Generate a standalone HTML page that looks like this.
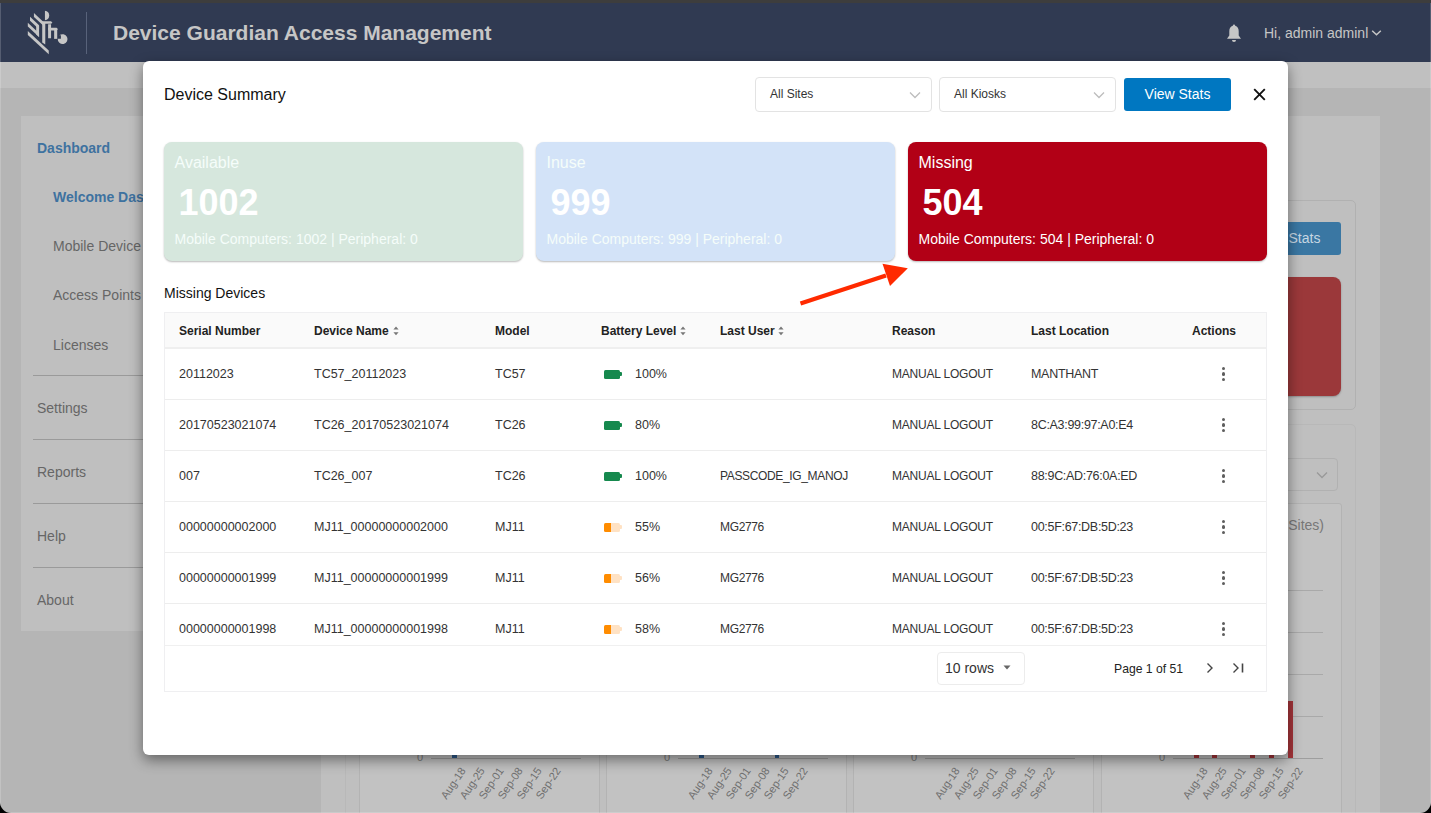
<!DOCTYPE html>
<html><head><meta charset="utf-8">
<style>
*{box-sizing:border-box;margin:0;padding:0}
html,body{width:1431px;height:813px;overflow:hidden;background:#000;font-family:"Liberation Sans",sans-serif}
#win{position:absolute;left:0;top:0;width:1431px;height:813px;background:#b5b5b5;border-radius:0 0 11px 11px;overflow:hidden}
.abs{position:absolute}
#topstrip{left:0;top:0;width:1431px;height:3px;background:#3d3d3d}
#hdr{left:0;top:3px;width:1431px;height:59px;background:#303a52}
#edgeL{left:0;top:3px;width:1px;height:810px;background:rgba(255,255,255,0.18)}
#edgeR{left:1430px;top:3px;width:1px;height:810px;background:rgba(255,255,255,0.18)}
#edgeB{left:0;top:812px;width:1431px;height:1px;background:rgba(255,255,255,0.18)}
.title{left:113px;top:20.5px;font-size:21px;font-weight:bold;color:#c6c6c6;white-space:nowrap}
.hi{left:1264px;top:24.7px;font-size:14px;color:#c6c6c6;white-space:nowrap}
#band{left:0;top:62px;width:1431px;height:26px;background:#c0c0c0}
#side{left:21px;top:116px;width:280px;height:515px;background:#bfbfbf}
#main{left:321px;top:116px;width:1059px;height:697px;background:#bfbfbf}
.sb{position:absolute;font-size:14px;color:#666;white-space:nowrap}
.sbh{font-weight:bold;color:#3e72a0}
.sdiv{position:absolute;left:33px;width:268px;height:1px;background:#9a9a9a}
/* modal */
#modal{left:143px;top:61px;width:1145px;height:694px;background:#fff;border-radius:6px;box-shadow:0 5px 14px rgba(0,0,0,0.45)}
.t{position:absolute;white-space:nowrap}
.sel{position:absolute;top:16px;height:35px;border:1px solid #e3e3e3;border-radius:4px;background:#fff}
.sel span{position:absolute;left:14px;top:9px;font-size:12px;color:#333}
.sel svg{position:absolute;right:10px;top:13px}
.card{position:absolute;top:80.5px;width:359px;height:119px;border-radius:8px;box-shadow:0 1px 2px rgba(0,0,0,0.28)}
.card .l1{position:absolute;left:10.5px;top:12px;font-size:16px;color:#fff}
.card .l2{position:absolute;left:14.5px;top:40px;font-size:36px;font-weight:bold;color:#fff}
.lt .l1,.lt .l3{color:#f5fdfa!important}
.card .l3{position:absolute;left:10.5px;top:89.5px;font-size:14px;color:#fff}
#tbl{position:absolute;left:21px;top:251px;width:1103px;height:380px;border:1px solid #efeff1;overflow:hidden}
.th{position:absolute;left:0;top:0;width:1101px;height:36px;background:#fafafa;border-bottom:2px solid #efefef}
.row{position:absolute;left:0;width:1101px;height:51px;border-bottom:1px solid #ededed;background:#fff}
.c{position:absolute;top:0;line-height:51px;font-size:12.5px;color:#333;white-space:nowrap}
.hc{position:absolute;top:-0.5px;line-height:36px;font-size:12px;font-weight:bold;color:#222;white-space:nowrap}
.bat{position:absolute;left:439px;top:21px;width:16px;height:8.5px;border-radius:1.5px}
.bat:after{content:"";position:absolute;right:-1.7px;top:2.2px;width:1.7px;height:4px;border-radius:0 1px 1px 0;background:inherit}
.g{background:#16894e}
.o{background:linear-gradient(90deg,#ff8c00 0,#ff8c00 44%,#ffe2c4 44%)}
.o:after{background:#ffe2c4}
.mu{font-size:12px;letter-spacing:-0.2px}
.lu{font-size:12px;letter-spacing:-0.35px}
.lo{letter-spacing:-0.3px}
.mo{letter-spacing:-0.2px}
.keb{position:absolute;left:1057px;top:18px;width:4px;height:15px}
.keb i{position:absolute;left:0.2px;width:3.3px;height:3.3px;border-radius:50%;background:#5e5e5e}
</style></head><body>
<div id="win">
  <div class="abs" id="band"></div>
  <div class="abs" id="side">
  </div>
  <div class="sb sbh" style="left:37px;top:140px">Dashboard</div>
  <div class="sb sbh" style="left:53px;top:189px">Welcome Dashboard</div>
  <div class="sb" style="left:53px;top:238px">Mobile Device</div>
  <div class="sb" style="left:53px;top:287px">Access Points</div>
  <div class="sb" style="left:53px;top:337px">Licenses</div>
  <div class="sdiv" style="top:375px"></div>
  <div class="sb" style="left:37px;top:400px">Settings</div>
  <div class="sdiv" style="top:439px"></div>
  <div class="sb" style="left:37px;top:464px">Reports</div>
  <div class="sdiv" style="top:503px"></div>
  <div class="sb" style="left:37px;top:528px">Help</div>
  <div class="sdiv" style="top:567px"></div>
  <div class="sb" style="left:37px;top:592px">About</div>
  <div class="abs" id="main"></div>

  <!-- background main content -->
  <div class="abs" style="left:345px;top:200px;width:1011px;height:210px;border:1px solid #b1b1b1;border-radius:5px"></div>
  <div class="abs" style="left:1234px;top:222px;width:107px;height:33px;background:#3a77a3;border-radius:3px;color:#c6d6e2;font-size:14px;line-height:33px;text-align:center;white-space:nowrap">View Stats</div>
  <div class="abs" style="left:359px;top:277px;width:359px;height:119px;background:#a8b1ab;border-radius:8px;box-shadow:0 1px 2px rgba(0,0,0,0.25)"></div>
  <div class="abs" style="left:731px;top:277px;width:359px;height:119px;background:#a7b0bb;border-radius:8px;box-shadow:0 1px 2px rgba(0,0,0,0.25)"></div>
  <div class="abs" style="left:982px;top:277px;width:359px;height:119px;background:#9b383a;border-radius:8px;box-shadow:0 1px 2px rgba(0,0,0,0.25)"></div>
  <div class="abs" style="left:345px;top:424px;width:1011px;height:420px;border:1px solid #b8b8b8;border-radius:5px"></div>
  <div class="abs" style="left:1160px;top:458px;width:178px;height:33px;border:1px solid #b1b1b1;border-radius:4px"></div>
  <svg class="abs" style="left:1316px;top:471px" width="12" height="8" viewBox="0 0 12 8"><path d="M1 1.5 L6 6.5 L11 1.5" fill="none" stroke="#999" stroke-width="1.3"/></svg>
  <div class="abs" style="left:359px;top:503px;width:241px;height:330px;background:#c2c2c2;border:1px solid #b3b3b3;border-radius:3px"></div><div class="abs" style="left:431px;top:590px;width:150px;height:1px;background:#a9a9a9"></div><div class="abs" style="left:431px;top:632px;width:150px;height:1px;background:#a9a9a9"></div><div class="abs" style="left:431px;top:674px;width:150px;height:1px;background:#a9a9a9"></div><div class="abs" style="left:431px;top:716px;width:150px;height:1px;background:#a9a9a9"></div><div class="abs" style="left:431px;top:758px;width:150px;height:1px;background:#9e9e9e"></div><div class="abs" style="left:417px;top:751px;font-size:11px;color:#7a7a7a">0</div><div class="abs" style="left:422px;top:764.5px;width:36px;height:13px;font-size:11px;line-height:13px;color:#6f6f6f;text-align:right;white-space:nowrap;transform-origin:100% 0;transform:rotate(-56deg)">Aug-18</div><div class="abs" style="left:441px;top:764.5px;width:36px;height:13px;font-size:11px;line-height:13px;color:#6f6f6f;text-align:right;white-space:nowrap;transform-origin:100% 0;transform:rotate(-56deg)">Aug-25</div><div class="abs" style="left:460px;top:764.5px;width:36px;height:13px;font-size:11px;line-height:13px;color:#6f6f6f;text-align:right;white-space:nowrap;transform-origin:100% 0;transform:rotate(-56deg)">Sep-01</div><div class="abs" style="left:479px;top:764.5px;width:36px;height:13px;font-size:11px;line-height:13px;color:#6f6f6f;text-align:right;white-space:nowrap;transform-origin:100% 0;transform:rotate(-56deg)">Sep-08</div><div class="abs" style="left:498px;top:764.5px;width:36px;height:13px;font-size:11px;line-height:13px;color:#6f6f6f;text-align:right;white-space:nowrap;transform-origin:100% 0;transform:rotate(-56deg)">Sep-15</div><div class="abs" style="left:517px;top:764.5px;width:36px;height:13px;font-size:11px;line-height:13px;color:#6f6f6f;text-align:right;white-space:nowrap;transform-origin:100% 0;transform:rotate(-56deg)">Sep-22</div>
  <div class="abs" style="left:606px;top:503px;width:241px;height:330px;background:#c2c2c2;border:1px solid #b3b3b3;border-radius:3px"></div><div class="abs" style="left:678px;top:590px;width:150px;height:1px;background:#a9a9a9"></div><div class="abs" style="left:678px;top:632px;width:150px;height:1px;background:#a9a9a9"></div><div class="abs" style="left:678px;top:674px;width:150px;height:1px;background:#a9a9a9"></div><div class="abs" style="left:678px;top:716px;width:150px;height:1px;background:#a9a9a9"></div><div class="abs" style="left:678px;top:758px;width:150px;height:1px;background:#9e9e9e"></div><div class="abs" style="left:664px;top:751px;font-size:11px;color:#7a7a7a">0</div><div class="abs" style="left:669px;top:764.5px;width:36px;height:13px;font-size:11px;line-height:13px;color:#6f6f6f;text-align:right;white-space:nowrap;transform-origin:100% 0;transform:rotate(-56deg)">Aug-18</div><div class="abs" style="left:688px;top:764.5px;width:36px;height:13px;font-size:11px;line-height:13px;color:#6f6f6f;text-align:right;white-space:nowrap;transform-origin:100% 0;transform:rotate(-56deg)">Aug-25</div><div class="abs" style="left:707px;top:764.5px;width:36px;height:13px;font-size:11px;line-height:13px;color:#6f6f6f;text-align:right;white-space:nowrap;transform-origin:100% 0;transform:rotate(-56deg)">Sep-01</div><div class="abs" style="left:726px;top:764.5px;width:36px;height:13px;font-size:11px;line-height:13px;color:#6f6f6f;text-align:right;white-space:nowrap;transform-origin:100% 0;transform:rotate(-56deg)">Sep-08</div><div class="abs" style="left:745px;top:764.5px;width:36px;height:13px;font-size:11px;line-height:13px;color:#6f6f6f;text-align:right;white-space:nowrap;transform-origin:100% 0;transform:rotate(-56deg)">Sep-15</div><div class="abs" style="left:764px;top:764.5px;width:36px;height:13px;font-size:11px;line-height:13px;color:#6f6f6f;text-align:right;white-space:nowrap;transform-origin:100% 0;transform:rotate(-56deg)">Sep-22</div>
  <div class="abs" style="left:853px;top:503px;width:241px;height:330px;background:#c2c2c2;border:1px solid #b3b3b3;border-radius:3px"></div><div class="abs" style="left:925px;top:590px;width:150px;height:1px;background:#a9a9a9"></div><div class="abs" style="left:925px;top:632px;width:150px;height:1px;background:#a9a9a9"></div><div class="abs" style="left:925px;top:674px;width:150px;height:1px;background:#a9a9a9"></div><div class="abs" style="left:925px;top:716px;width:150px;height:1px;background:#a9a9a9"></div><div class="abs" style="left:925px;top:758px;width:150px;height:1px;background:#9e9e9e"></div><div class="abs" style="left:911px;top:751px;font-size:11px;color:#7a7a7a">0</div><div class="abs" style="left:916px;top:764.5px;width:36px;height:13px;font-size:11px;line-height:13px;color:#6f6f6f;text-align:right;white-space:nowrap;transform-origin:100% 0;transform:rotate(-56deg)">Aug-18</div><div class="abs" style="left:935px;top:764.5px;width:36px;height:13px;font-size:11px;line-height:13px;color:#6f6f6f;text-align:right;white-space:nowrap;transform-origin:100% 0;transform:rotate(-56deg)">Aug-25</div><div class="abs" style="left:954px;top:764.5px;width:36px;height:13px;font-size:11px;line-height:13px;color:#6f6f6f;text-align:right;white-space:nowrap;transform-origin:100% 0;transform:rotate(-56deg)">Sep-01</div><div class="abs" style="left:973px;top:764.5px;width:36px;height:13px;font-size:11px;line-height:13px;color:#6f6f6f;text-align:right;white-space:nowrap;transform-origin:100% 0;transform:rotate(-56deg)">Sep-08</div><div class="abs" style="left:992px;top:764.5px;width:36px;height:13px;font-size:11px;line-height:13px;color:#6f6f6f;text-align:right;white-space:nowrap;transform-origin:100% 0;transform:rotate(-56deg)">Sep-15</div><div class="abs" style="left:1011px;top:764.5px;width:36px;height:13px;font-size:11px;line-height:13px;color:#6f6f6f;text-align:right;white-space:nowrap;transform-origin:100% 0;transform:rotate(-56deg)">Sep-22</div>
  <div class="abs" style="left:1101px;top:503px;width:241px;height:330px;background:#c2c2c2;border:1px solid #b3b3b3;border-radius:3px"></div><div class="abs" style="left:1173px;top:590px;width:150px;height:1px;background:#a9a9a9"></div><div class="abs" style="left:1173px;top:632px;width:150px;height:1px;background:#a9a9a9"></div><div class="abs" style="left:1173px;top:674px;width:150px;height:1px;background:#a9a9a9"></div><div class="abs" style="left:1173px;top:716px;width:150px;height:1px;background:#a9a9a9"></div><div class="abs" style="left:1173px;top:758px;width:150px;height:1px;background:#9e9e9e"></div><div class="abs" style="left:1159px;top:751px;font-size:11px;color:#7a7a7a">0</div><div class="abs" style="left:1164px;top:764.5px;width:36px;height:13px;font-size:11px;line-height:13px;color:#6f6f6f;text-align:right;white-space:nowrap;transform-origin:100% 0;transform:rotate(-56deg)">Aug-18</div><div class="abs" style="left:1183px;top:764.5px;width:36px;height:13px;font-size:11px;line-height:13px;color:#6f6f6f;text-align:right;white-space:nowrap;transform-origin:100% 0;transform:rotate(-56deg)">Aug-25</div><div class="abs" style="left:1202px;top:764.5px;width:36px;height:13px;font-size:11px;line-height:13px;color:#6f6f6f;text-align:right;white-space:nowrap;transform-origin:100% 0;transform:rotate(-56deg)">Sep-01</div><div class="abs" style="left:1221px;top:764.5px;width:36px;height:13px;font-size:11px;line-height:13px;color:#6f6f6f;text-align:right;white-space:nowrap;transform-origin:100% 0;transform:rotate(-56deg)">Sep-08</div><div class="abs" style="left:1240px;top:764.5px;width:36px;height:13px;font-size:11px;line-height:13px;color:#6f6f6f;text-align:right;white-space:nowrap;transform-origin:100% 0;transform:rotate(-56deg)">Sep-15</div><div class="abs" style="left:1259px;top:764.5px;width:36px;height:13px;font-size:11px;line-height:13px;color:#6f6f6f;text-align:right;white-space:nowrap;transform-origin:100% 0;transform:rotate(-56deg)">Sep-22</div><div class="abs" style="left:452px;top:755px;width:4.5px;height:3px;background:#2e5b8c"></div><div class="abs" style="left:699px;top:755px;width:4.5px;height:3px;background:#2e5b8c"></div><div class="abs" style="left:774.5px;top:755px;width:4.5px;height:3px;background:#2e5b8c"></div><div class="abs" style="left:1193.5px;top:754px;width:5px;height:4px;background:#a6353a"></div><div class="abs" style="left:1212px;top:754px;width:5px;height:4px;background:#a6353a"></div><div class="abs" style="left:1249.5px;top:754px;width:5px;height:4px;background:#a6353a"></div><div class="abs" style="left:1269px;top:754px;width:5px;height:4px;background:#a6353a"></div><div class="abs" style="left:1287.5px;top:701px;width:5.5px;height:57px;background:#a6353a"></div><div class="abs" style="left:1150px;top:517px;width:174px;font-size:14px;color:#777;text-align:right;white-space:nowrap">Missing Devices (All Sites)</div>

  <div class="abs" id="topstrip"></div>
  <div class="abs" id="hdr"></div>
  <div class="abs" id="edgeL"></div>
  <div class="abs" id="edgeR"></div>
  <div class="abs" id="edgeB"></div>
  <div class="abs" style="left:86px;top:12px;width:1px;height:42px;background:#58627a"></div>
  <div class="abs title">Device Guardian Access Management</div>
  <div class="abs hi">Hi, admin adminl</div>

  <svg class="abs" style="left:24px;top:8px" width="50" height="50" viewBox="0 0 813 813">
    <g fill="#c6c6c6">
      <path d="M62 372 L402 690 L402 752 L62 440 Z"/>
      <path d="M62 238 L245 410 L245 472 L62 302 Z"/>
      <path d="M98 142 L245 280 L245 345 L98 208 Z"/>
      <path d="M198 290 L245 290 L245 470 L198 430 Z"/>
      <path d="M162 82 L330 238 L330 302 L162 146 Z"/>
      <path d="M296 226 L346 226 L346 592 L296 560 Z"/>
      <path d="M340 45 A78 78 0 0 1 340 200 Z"/>
      <path d="M296 214 L440 214 L462 240 L440 258 L296 258 Z"/>
      <path d="M392 264 L440 264 L440 492 L392 492 Z"/>
      <path d="M392 322 L530 322 L550 345 L530 364 L392 364 Z"/>
      <path d="M490 330 L540 330 L540 502 L490 502 Z"/>
      <path d="M575 445 A80 80 0 1 1 548 500 L600 500 L600 445 Z"/>
    </g>
  </svg>
  <svg class="abs" style="left:1226px;top:23px" width="16" height="20" viewBox="0 0 16 20">
    <path d="M8 1.5 C8.8 1.5 9 2.2 9.2 2.8 C11.6 3.4 12.7 5.6 12.7 8.2 L12.7 12.6 L15 15.7 L1 15.7 L3.3 12.6 L3.3 8.2 C3.3 5.6 4.4 3.4 6.8 2.8 C7 2.2 7.2 1.5 8 1.5 Z" fill="#c6c6c6"/>
    <path d="M6 17 A2 2 0 0 0 10 17 Z" fill="#c6c6c6"/>
  </svg>
  <svg class="abs" style="left:1371px;top:29px" width="11" height="8" viewBox="0 0 11 8"><path d="M1.2 1.8 L5.5 5.8 L9.8 1.8" fill="none" stroke="#c6c6c6" stroke-width="1.5"/></svg>

  <div class="abs" id="modal">
    <div class="t" style="left:21px;top:25px;font-size:16px;color:#111">Device Summary</div>
    <div class="sel" style="left:612px;width:177px"><span>All Sites</span>
      <svg width="12" height="8" viewBox="0 0 12 8"><path d="M1 1.5 L6 6.5 L11 1.5" fill="none" stroke="#bdbdbd" stroke-width="1.3"/></svg></div>
    <div class="sel" style="left:796px;width:177px"><span>All Kiosks</span>
      <svg width="12" height="8" viewBox="0 0 12 8"><path d="M1 1.5 L6 6.5 L11 1.5" fill="none" stroke="#bdbdbd" stroke-width="1.3"/></svg></div>
    <div class="t" style="left:981px;top:17px;width:107px;height:33px;background:#0077c1;border-radius:3px;color:#fff;font-size:14px;line-height:33px;text-align:center">View Stats</div>
    <svg class="t" style="left:1110px;top:27px" width="13" height="13" viewBox="0 0 13 13"><path d="M1.2 1.2 L11.8 11.8 M11.8 1.2 L1.2 11.8" stroke="#111" stroke-width="1.9"/></svg>

    <div class="card lt" style="left:21px;background:#d6e7dd"><div class="l1">Available</div><div class="l2">1002</div><div class="l3">Mobile Computers: 1002 | Peripheral: 0</div></div>
    <div class="card lt" style="left:393px;background:#d3e3f8"><div class="l1">Inuse</div><div class="l2">999</div><div class="l3">Mobile Computers: 999 | Peripheral: 0</div></div>
    <div class="card" style="left:765px;background:#b20016"><div class="l1">Missing</div><div class="l2">504</div><div class="l3">Mobile Computers: 504 | Peripheral: 0</div></div>

    <div class="t" style="left:21px;top:223.5px;font-size:14px;color:#111">Missing Devices</div>

    <svg class="t" style="left:0;top:0" width="1145" height="694" viewBox="143 61 1145 694">
      <path d="M800.5 303.5 L886 275.5" stroke="#ff2a00" stroke-width="4.2"/>
      <path d="M882.5 263.8 L907.8 268.2 L890 286 Z" fill="#ff2a00"/>
    </svg>

    <div id="tbl">
      <div class="th">
        <div class="hc" style="left:14px">Serial Number</div>
        <div class="hc" style="left:149px">Device Name</div><svg class="t" style="left:228px;top:13px" width="6" height="10" viewBox="0 0 6 10"><path d="M0.4 3.6 L3 0.6 L5.6 3.6 Z M0.4 6.2 L3 9.2 L5.6 6.2 Z" fill="#777"/></svg>
        <div class="hc" style="left:330px">Model</div>
        <div class="hc" style="left:436px">Battery Level</div><svg class="t" style="left:515px;top:13px" width="6" height="10" viewBox="0 0 6 10"><path d="M0.4 3.6 L3 0.6 L5.6 3.6 Z M0.4 6.2 L3 9.2 L5.6 6.2 Z" fill="#777"/></svg>
        <div class="hc" style="left:555px">Last User</div><svg class="t" style="left:612.5px;top:13px" width="6" height="10" viewBox="0 0 6 10"><path d="M0.4 3.6 L3 0.6 L5.6 3.6 Z M0.4 6.2 L3 9.2 L5.6 6.2 Z" fill="#777"/></svg>
        <div class="hc" style="left:727px">Reason</div>
        <div class="hc" style="left:866px">Last Location</div>
        <div class="hc" style="left:1027px">Actions</div>
      </div>
      <div class="row" style="top:36px"><div class="c" style="left:14px">20112023</div><div class="c" style="left:149px">TC57_20112023</div><div class="c" style="left:330px">TC57</div><div class="bat g"></div><div class="c" style="left:470px">100%</div><div class="c lu" style="left:555px"></div><div class="c mu" style="left:727px">MANUAL LOGOUT</div><div class="c lo" style="left:866px">MANTHANT</div><div class="keb"><i style="top:0"></i><i style="top:5.4px"></i><i style="top:10.8px"></i></div></div>
      <div class="row" style="top:87px"><div class="c" style="left:14px">20170523021074</div><div class="c" style="left:149px">TC26_20170523021074</div><div class="c" style="left:330px">TC26</div><div class="bat g"></div><div class="c" style="left:470px">80%</div><div class="c lu" style="left:555px"></div><div class="c mu" style="left:727px">MANUAL LOGOUT</div><div class="c lo" style="left:866px">8C:A3:99:97:A0:E4</div><div class="keb"><i style="top:0"></i><i style="top:5.4px"></i><i style="top:10.8px"></i></div></div>
      <div class="row" style="top:138px"><div class="c" style="left:14px">007</div><div class="c" style="left:149px">TC26_007</div><div class="c" style="left:330px">TC26</div><div class="bat g"></div><div class="c" style="left:470px">100%</div><div class="c lu" style="left:555px">PASSCODE_IG_MANOJ</div><div class="c mu" style="left:727px">MANUAL LOGOUT</div><div class="c lo" style="left:866px">88:9C:AD:76:0A:ED</div><div class="keb"><i style="top:0"></i><i style="top:5.4px"></i><i style="top:10.8px"></i></div></div>
      <div class="row" style="top:189px"><div class="c" style="left:14px">00000000002000</div><div class="c" style="left:149px">MJ11_00000000002000</div><div class="c" style="left:330px">MJ11</div><div class="bat o"></div><div class="c" style="left:470px">55%</div><div class="c lu" style="left:555px">MG2776</div><div class="c mu" style="left:727px">MANUAL LOGOUT</div><div class="c lo" style="left:866px">00:5F:67:DB:5D:23</div><div class="keb"><i style="top:0"></i><i style="top:5.4px"></i><i style="top:10.8px"></i></div></div>
      <div class="row" style="top:240px"><div class="c" style="left:14px">00000000001999</div><div class="c" style="left:149px">MJ11_00000000001999</div><div class="c" style="left:330px">MJ11</div><div class="bat o"></div><div class="c" style="left:470px">56%</div><div class="c lu" style="left:555px">MG2776</div><div class="c mu" style="left:727px">MANUAL LOGOUT</div><div class="c lo" style="left:866px">00:5F:67:DB:5D:23</div><div class="keb"><i style="top:0"></i><i style="top:5.4px"></i><i style="top:10.8px"></i></div></div>
      <div class="row" style="top:291px"><div class="c" style="left:14px">00000000001998</div><div class="c" style="left:149px">MJ11_00000000001998</div><div class="c" style="left:330px">MJ11</div><div class="bat o"></div><div class="c" style="left:470px">58%</div><div class="c lu" style="left:555px">MG2776</div><div class="c mu" style="left:727px">MANUAL LOGOUT</div><div class="c lo" style="left:866px">00:5F:67:DB:5D:23</div><div class="keb"><i style="top:0"></i><i style="top:5.4px"></i><i style="top:10.8px"></i></div></div>

      <div class="abs" style="left:0;top:332px;width:1101px;height:46px;background:#fff;border-top:1px solid #f0f0f0">
        <div class="abs" style="left:772px;top:6px;width:88px;height:33px;border:1px solid #ececec;border-radius:4px"></div>
        <div class="t" style="left:780px;top:14px;font-size:14px;color:#333">10 rows</div>
        <svg class="t" style="left:838px;top:19px" width="8" height="5" viewBox="0 0 8 5"><path d="M0.5 0.5 L7.5 0.5 L4 4.5 Z" fill="#666"/></svg>
        <div class="t" style="left:949px;top:15.5px;font-size:12.2px;color:#222">Page 1 of 51</div>
        <svg class="t" style="left:1040px;top:16px" width="10" height="12" viewBox="0 0 10 12"><path d="M2.5 1.5 L7 6 L2.5 10.5" fill="none" stroke="#444" stroke-width="1.4"/></svg>
        <svg class="t" style="left:1067px;top:16px" width="14" height="12" viewBox="0 0 14 12"><path d="M1.5 1.5 L6 6 L1.5 10.5" fill="none" stroke="#444" stroke-width="1.4"/><path d="M10.5 1.5 V10.5" stroke="#444" stroke-width="1.6"/></svg>
      </div>
    </div>
  </div>
</div>
</body></html>
